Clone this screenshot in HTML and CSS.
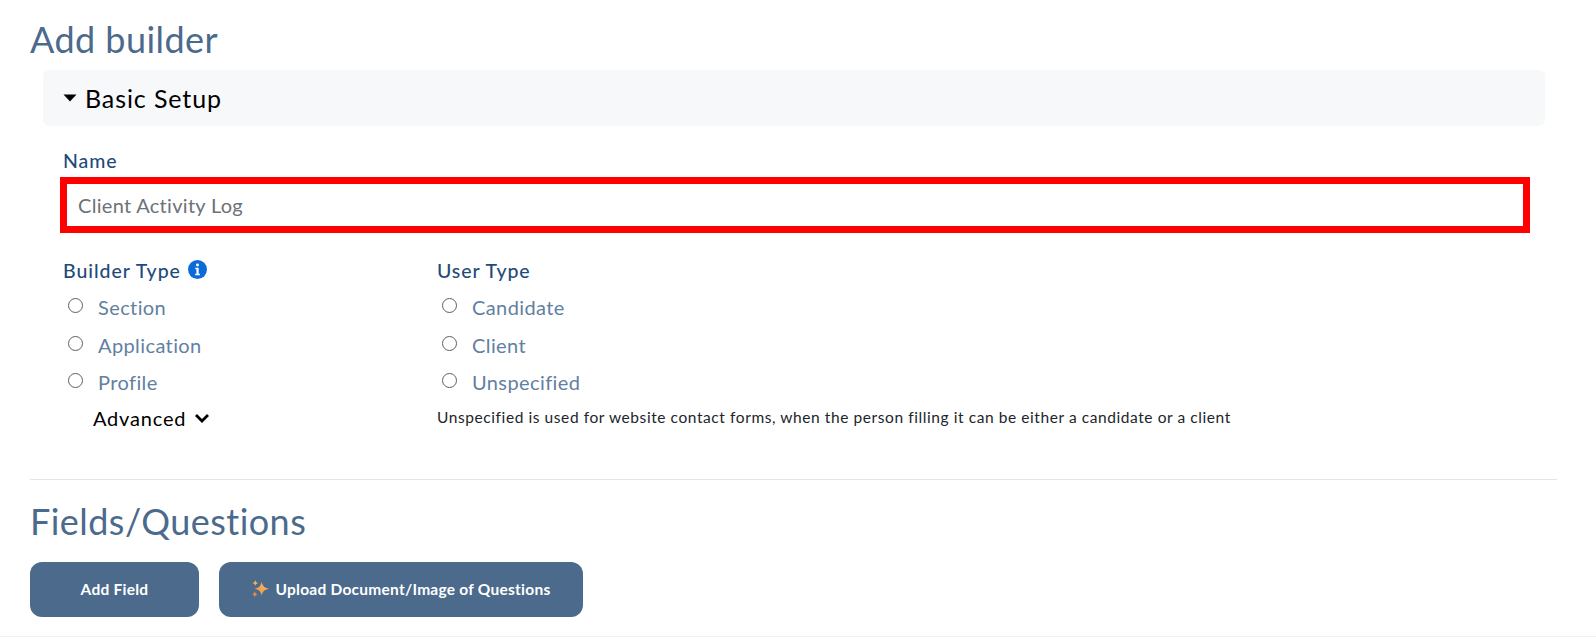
FILE: index.html
```html
<!DOCTYPE html>
<html lang="en">
<head>
<meta charset="utf-8">
<title>Add builder</title>
<link rel="stylesheet" href="styles.css">
</head>
<body>
<main class="page">
  <h1 class="page-title">Add builder</h1>
  <section class="accordion">
    <div class="accordion-header">
      <svg class="caret" viewBox="0 0 14 8" aria-hidden="true"><path d="M0.5 0.5h13L7 7.5z"/></svg>
      <span>Basic Setup</span>
    </div>
    <div class="accordion-body">
      <label class="field-label" for="name">Name</label>
      <input class="name-input" id="name" type="text" value="Client Activity Log">
      <div class="type-grid">
        <div class="type-col">
          <div class="field-label with-icon">Builder Type
            <svg class="info" viewBox="0 0 18 18" aria-hidden="true"><circle cx="9" cy="9" r="9" fill="#0b6bd8"/><circle cx="9" cy="4.8" r="1.4" fill="#fff"/><path d="M6.9 7.4h3.2v5.6h1.2v1.4H6.8V13h1.2V8.8H6.9z" fill="#fff"/></svg>
          </div>
          <label class="option"><input type="radio" name="builder"><span>Section</span></label>
          <label class="option"><input type="radio" name="builder"><span>Application</span></label>
          <label class="option"><input type="radio" name="builder"><span>Profile</span></label>
          <div class="advanced">Advanced
            <svg class="chev" viewBox="0 0 16 10" aria-hidden="true"><path d="M2 2l6 6 6-6" fill="none" stroke="#000" stroke-width="2.8"/></svg>
          </div>
        </div>
        <div class="type-col">
          <div class="field-label">User Type</div>
          <label class="option"><input type="radio" name="user"><span>Candidate</span></label>
          <label class="option"><input type="radio" name="user"><span>Client</span></label>
          <label class="option"><input type="radio" name="user"><span>Unspecified</span></label>
          <p class="hint">Unspecified is used for website contact forms, when the person filling it can be either a candidate or a client</p>
        </div>
      </div>
    </div>
  </section>
  <hr class="divider">
  <h2 class="page-title fields-title">Fields/Questions</h2>
  <div class="actions">
    <button class="btn btn-add" type="button">Add Field</button>
    <button class="btn btn-upload" type="button">
      <svg class="sparkle" viewBox="0 0 16 16" aria-hidden="true">
        <defs><linearGradient id="spark" x1="0" y1="1" x2="1" y2="0"><stop offset="0" stop-color="#e8894a"/><stop offset="1" stop-color="#fcc45c"/></linearGradient></defs>
        <path fill="url(#spark)" d="M9.5 1.5c.8 3.9 2.2 5.3 6.3 6.2-4.1.9-5.5 2.4-6.3 6.3-.8-3.9-2.2-5.4-6.3-6.3 4.1-.9 5.5-2.3 6.3-6.2z"/>
        <path fill="#f6b457" d="M3.8 0c.4 1.7 1 2.3 2.6 2.7-1.6.4-2.2 1-2.6 2.7-.4-1.7-1-2.3-2.6-2.7 1.6-.4 2.2-1 2.6-2.7z"/>
        <path fill="#e8894a" d="M3.4 9.8c.4 1.8 1 2.4 2.4 2.8-1.4.4-2 1-2.4 2.9-.4-1.9-1-2.5-2.4-2.9 1.4-.4 2-1 2.4-2.8z"/>
      </svg>
      Upload Document/Image of Questions
    </button>
  </div>
</main>
<div class="page-end"></div>
</body>
</html>
```
FILE: styles.css
```css
* { box-sizing: border-box; }
html, body { margin: 0; padding: 0; background: #fff; }
body { font-family: "Lato", "Noto Sans", sans-serif; height: 643px; overflow: hidden; position: relative; }
.page { padding: 0 39px 0 30px; }
.page-title {
  margin: 0;
  font-size: 36px;
  line-height: 46px;
  font-weight: 400;
  letter-spacing: 0.45px;
  color: #4c6a8c;
  padding-top: 16px;
}
.accordion { margin: 8px 12px 0 13px; }
.accordion-header {
  height: 56px;
  display: flex;
  align-items: center;
  gap: 8px;
  padding-left: 20px;
  background: #f7f8fa;
  border-radius: 6px;
  font-size: 25px;
  letter-spacing: 0.9px;
  color: #000;
}
.caret { width: 14px; height: 8px; fill: #000; }
.accordion-body { padding: 23px 15px 0 17px; }
.field-label {
  display: block;
  margin-left: 3px;
  font-size: 19.5px;
  line-height: 24px;
  font-weight: 500;
  letter-spacing: 0.95px;
  color: #1f4b7a;
}
.name-input {
  display: block;
  width: 100%;
  height: 56px;
  margin-top: 4px;
  padding: 0 11px;
  border: 7px solid #ff0000;
  border-radius: 0;
  outline: none;
  background: #fff;
  font-family: inherit;
  font-size: 20px;
  letter-spacing: 0.3px;
  color: #6c7278;
}
.type-grid { display: grid; grid-template-columns: 374px 1fr; margin-top: 26px; }
.with-icon { display: flex; align-items: center; gap: 7px; }
.info { width: 19px; height: 19px; margin-top: -3px; }
.option {
  display: flex;
  align-items: flex-start;
  height: 37.5px;
  padding: 10px 0 0 8px;
  font-size: 20px;
  line-height: 28px;
  letter-spacing: 0.4px;
  color: #6280a1;
}
.option input {
  appearance: none;
  flex: none;
  width: 15px;
  height: 15px;
  margin: 5px 15px 0 0;
  border: 1px solid #5f5f5f;
  border-radius: 50%;
  background: #fff;
}
.advanced {
  display: flex;
  align-items: center;
  gap: 8px;
  margin: 8px 0 0 33px;
  font-size: 20px;
  line-height: 28px;
  letter-spacing: 0.8px;
  color: #000;
}
.chev { width: 16px; height: 10px; }
.hint { margin: 9px 0 0 3px; font-size: 15.5px; line-height: 24px; letter-spacing: 0.58px; color: #212529; }
.divider { margin: 47px 0 0; border: 0; border-top: 1px solid #e3e5e8; }
.fields-title { padding-top: 18px; }
.actions { display: flex; gap: 20px; margin-top: 18px; }
.btn {
  height: 55px;
  border: 0;
  border-radius: 12px;
  background: #4c6a8c;
  color: #fff;
  font-family: inherit;
  font-size: 15.5px;
  font-weight: 700;
  letter-spacing: 0.25px;
  display: flex;
  align-items: center;
  justify-content: center;
  gap: 6px;
}
.btn-add { width: 169px; }
.btn-upload { width: 364px; }
.sparkle { width: 18px; height: 18px; }
.page-end { position: absolute; left: 0; right: 0; top: 636px; border-top: 1px solid #f2f3f5; }
```
